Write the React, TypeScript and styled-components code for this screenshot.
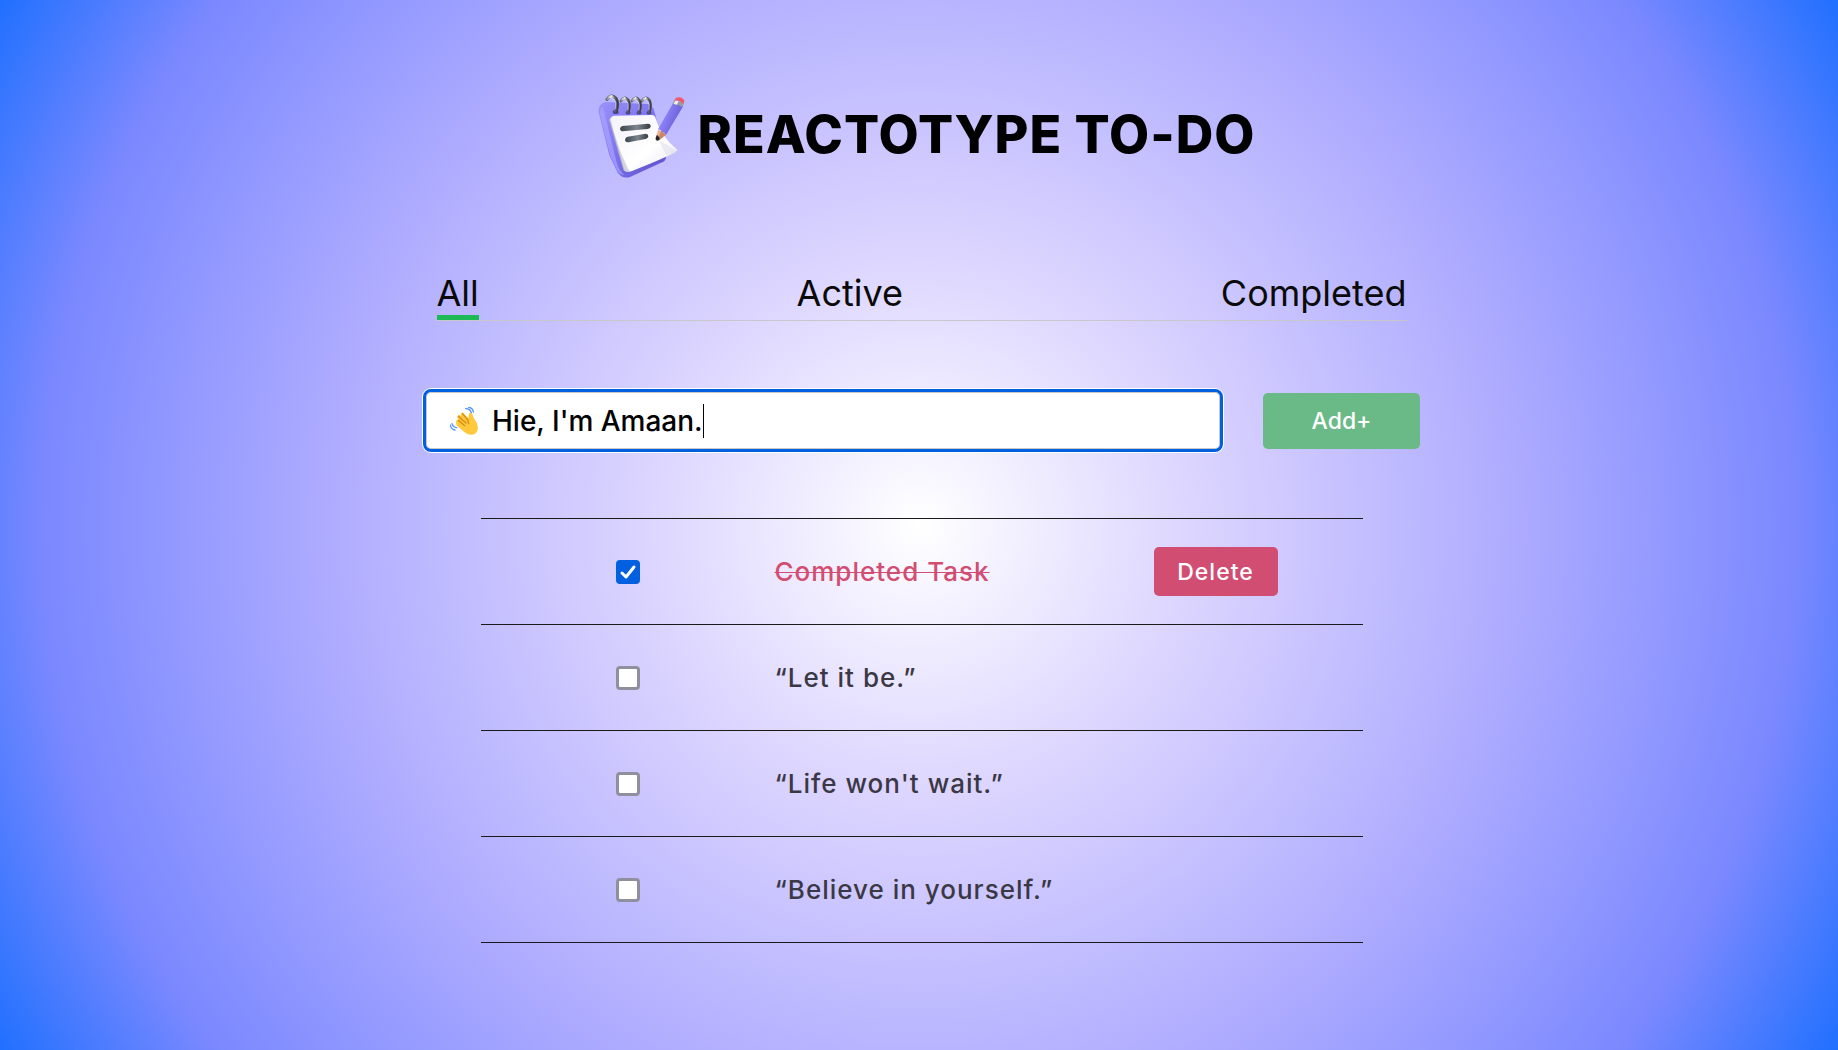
import React, { useState } from "react";
import styled, { createGlobalStyle } from "styled-components";

const sans = `Inter, "Noto Sans", sans-serif`;

const GlobalStyle = createGlobalStyle`
  *, *::before, *::after { box-sizing: border-box; }
  body {
    margin: 0;
    min-height: 100vh;
    font-family: ${sans};
    color: #000;
    background: radial-gradient(circle at 50% 50%, #fff 0%, #ddd6ff 25%, #b0adff 55%, #7a88ff 83%, #2070ff 100%) no-repeat;
    background-size: 100% 100%;
  }
  button, input { font-family: inherit; }
`;

const Page = styled.main`
  display: flex;
  flex-direction: column;
  align-items: center;
  min-height: 100vh;
  padding: 94px 0 40px 5px;
`;

const Header = styled.header`
  display: flex;
  align-items: center;
  gap: 12px;
  height: 86px;
  padding-left: 10px;
`;

const Title = styled.h1`
  margin: 0;
  padding-bottom: 4px;
  font-size: 52px;
  line-height: 64px;
  font-weight: 800;
  letter-spacing: 1px;
  text-transform: uppercase;
`;

const Tabs = styled.nav`
  display: flex;
  justify-content: space-between;
  width: min(970px, 90%);
  margin-top: 91px;
  border-bottom: 1px solid #c8c8cc;
`;

const Tab = styled.button<{ $active: boolean }>`
  padding: 0;
  border: 0;
  border-bottom: 5px solid ${(p) => (p.$active ? "#1db954" : "transparent")};
  background: none;
  color: #0a0a0a;
  font-size: 36px;
  line-height: 44px;
  cursor: pointer;
`;

const Form = styled.form`
  display: flex;
  align-items: center;
  gap: 40px;
  width: min(997px, 92%);
  margin-top: 68px;
`;

const Field = styled.label`
  display: flex;
  flex: 1;
  align-items: center;
  min-width: 0;
  height: 63px;
  padding: 0 24px;
  border: 3px solid #0060df;
  border-radius: 8px;
  background: #fff;
  box-shadow: 0 0 0 1px #fff, inset 0 0 0 1px #c8c8c8;
  cursor: text;
`;

const TaskInput = styled.input`
  field-sizing: content;
  max-width: 100%;
  min-width: 4px;
  height: 40px;
  margin-left: 14px;
  padding: 0;
  border: 0;
  outline: 0;
  background: none;
  color: #000;
  caret-color: transparent;
  font-size: 28px;
  font-weight: 500;
`;

const Caret = styled.span`
  width: 1px;
  height: 34px;
  background: #000;
`;

const AddButton = styled.button`
  width: 157px;
  height: 56px;
  border: 0;
  border-radius: 5px;
  background: #6aba88;
  color: #fff;
  font-size: 23px;
  font-weight: 500;
  cursor: pointer;
`;

const List = styled.ul`
  width: min(882px, 90%);
  margin: 66px 0 0;
  padding: 0;
  border-top: 1px solid #1a1a1a;
  list-style: none;
`;

const Row = styled.li`
  display: grid;
  grid-template-columns: repeat(3, 1fr);
  align-items: center;
  height: 106px;
  border-bottom: 1px solid #1a1a1a;
`;

const CheckCell = styled.span`
  display: grid;
  place-items: center;
  > * { grid-area: 1 / 1; }
  svg { pointer-events: none; }
`;

const Check = styled.input`
  appearance: none;
  width: 24px;
  height: 24px;
  margin: 0;
  border: 3px solid #8f8f9d;
  border-radius: 4px;
  background: #fff;
  cursor: pointer;
  &:checked {
    border-color: #0060df;
    background: #0060df;
  }
`;

const TaskText = styled.label<{ $done: boolean }>`
  color: ${(p) => (p.$done ? "#d14d72" : "#3b3846")};
  font-size: 26px;
  line-height: 32px;
  font-weight: 500;
  letter-spacing: 1px;
  white-space: nowrap;
  text-decoration: ${(p) => (p.$done ? "line-through 1px" : "none")};
`;

const DeleteButton = styled.button`
  justify-self: center;
  width: 124px;
  height: 49px;
  padding: 0;
  border: 0;
  border-radius: 5px;
  background: #d14d72;
  color: #fff;
  font-size: 23px;
  font-weight: 500;
  letter-spacing: 1px;
  cursor: pointer;
`;

function NotepadLogo() {
  return (
    <svg width="88" height="86" viewBox="48 42 264 258" aria-hidden="true">
      <defs>
        <linearGradient id="cover" x1="0" y1="0" x2="1" y2="1">
          <stop offset="0" stopColor="#9a92fa" />
          <stop offset="0.5" stopColor="#7d72ee" />
          <stop offset="1" stopColor="#5b4fc4" />
        </linearGradient>
        <linearGradient id="paper" x1="0" y1="0" x2="1" y2="1">
          <stop offset="0" stopColor="#f3f3fa" />
          <stop offset="0.6" stopColor="#ffffff" />
          <stop offset="1" stopColor="#e9e8f4" />
        </linearGradient>
        <linearGradient id="ink" x1="0" y1="0" x2="1" y2="0">
          <stop offset="0" stopColor="#3d444c" />
          <stop offset="0.55" stopColor="#7c858e" />
          <stop offset="1" stopColor="#343a42" />
        </linearGradient>
        <linearGradient id="ring" x1="0" y1="0" x2="1" y2="0">
          <stop offset="0" stopColor="#8d8d96" />
          <stop offset="0.4" stopColor="#f4f4f7" />
          <stop offset="0.7" stopColor="#77777f" />
          <stop offset="1" stopColor="#3e3e45" />
        </linearGradient>
        <linearGradient id="barrel" x1="0" y1="0" x2="1" y2="0.5">
          <stop offset="0" stopColor="#a69dff" />
          <stop offset="0.5" stopColor="#8378f0" />
          <stop offset="1" stopColor="#6257cf" />
        </linearGradient>
      </defs>
      <path d="M70 66 L196 72 Q212 76 217 94 L252 230 Q252 242 242 246 L144 291 Q120 298 106 276 L82 226 L50 96 Q49 72 70 66Z" fill="url(#cover)" />
      <path d="M57 84 Q58 78 64 84 L103 244 Q112 276 128 285 Q112 286 103 268 L84 226 L53 98Z" fill="#aaa2ff" opacity="0.7" />
      <path d="M86 112 L82 120 L124 268 Q128 278 142 276 L282 218 L250 190Z" fill="#d4d3e2" />
      <path d="M83 121 L126 271" stroke="#a5a4b8" strokeWidth="2" />
      <path d="M89 111 Q92 107 98 107 L210 105 Q217 105 220 112 Q235 168 287 211 Q242 238 151 272 Q142 277 137 264 Q104 196 86 118Z" fill="url(#paper)" />
      <path d="M121 138 L198 131 Q207 132 206 140 Q204 146 197 147 L123 154 Q114 153 114 146 Q115 140 121 138Z" fill="url(#ink)" />
      <path d="M137 170 L191 161 Q199 162 199 169 Q198 176 191 177 L140 187 Q130 187 129 179 Q130 172 137 170Z" fill="url(#ink)" />
      {[74, 116, 149, 179].map((x, i) => (
        <g key={x} transform={`translate(${x} ${i === 0 ? 46 : 52}) scale(${i === 0 ? 1 : 0.82} ${i === 0 ? 1 : 0.92})`}>
          <ellipse cx="27" cy="50" rx="9" ry="6" fill="#4b4399" />
          <path d="M1 12 Q14 -6 28 9 Q38 25 28 49" fill="none" stroke="#4a4a52" strokeWidth="9" strokeLinecap="round" />
          <path d="M2 11 Q14 -5 27 10 Q36 26 27 48" fill="none" stroke="url(#ring)" strokeWidth="7" strokeLinecap="round" />
          <path d="M8 6 Q22 5 28 23 L27 40" fill="none" stroke="#ffffff" strokeWidth="2" strokeLinecap="round" opacity="0.8" />
        </g>
      ))}
      <path d="M230 180 L287 213 L252 225Z" fill="#dddcea" opacity="0.5" />
      <path d="M229 148 L252 164 L232 180 Q223 184 220 177Z" fill="#e9b08c" />
      <path d="M238 153 L252 164 L232 180 L226 180Z" fill="#c98764" />
      <path d="M224 166 Q231 167 233 178 L228 182 Q220 183 221 175Z" fill="#25232b" />
      <path d="M273 70 L304 78 L252 165 Q248 155 239 156 Q237 147 228 148Z" fill="url(#barrel)" />
      <path d="M277 60 L306 68 Q305 77 300 82 Q290 72 271 72Z" fill="#9b9ba5" />
      <path d="M280 62 L290 64 L284 74 L275 71Z" fill="#ededf2" />
      <path d="M279 58 Q282 51 292 52 Q306 55 307 63 L304 72 Q292 60 277 61Z" fill="#ef5a6c" />
    </svg>
  );
}

function WavingHand() {
  return (
    <svg width="28" height="28" viewBox="0 0 84 84" aria-hidden="true">
      <path d="M19 46 Q16 38 25 39 L22 31 Q22 22 31 25 L33 27 Q31 15 40 17 L52 31 L56 33 Q56 26 57 20 Q62 14 67 21 Q68 27 73 36 Q86 51 83 68 Q78 84 61 83 Q51 82 42 74 L21 56 Q17 51 19 46Z" fill="#ffc83d" />
      <path d="M25 40 L44 56 M25 28 L48 48 M37 20 L54 39 Q52 45 57 50" fill="none" stroke="#d98b12" strokeWidth="4" strokeLinecap="round" />
      <path d="M47 5 Q60 5 64 17 M56 1 Q69 3 70 15 M6 50 Q9 61 20 62 M1 54 Q3 67 15 69" fill="none" stroke="#5092ff" strokeWidth="4" strokeLinecap="round" />
    </svg>
  );
}

const filters = ["All", "Active", "Completed"];

const initialTasks = [
  { id: 1, text: "Completed Task", done: true },
  { id: 2, text: "“Let it be.”", done: false },
  { id: 3, text: "“Life won't wait.”", done: false },
  { id: 4, text: "“Believe in yourself.”", done: false },
];

export default function App() {
  const [filter, setFilter] = useState("All");
  const [draft, setDraft] = useState("Hie, I'm Amaan.");
  const [tasks, setTasks] = useState(initialTasks);

  const visible = tasks.filter(
    (t) => filter === "All" || (filter === "Completed" ? t.done : !t.done)
  );

  const addTask = (e: React.FormEvent) => {
    e.preventDefault();
    if (!draft.trim()) return;
    setTasks([...tasks, { id: Date.now(), text: draft, done: false }]);
    setDraft("");
  };

  const toggle = (id: number) =>
    setTasks(tasks.map((t) => (t.id === id ? { ...t, done: !t.done } : t)));

  return (
    <>
      <GlobalStyle />
      <Page>
        <Header>
          <NotepadLogo />
          <Title>Reactotype To-Do</Title>
        </Header>
        <Tabs>
          {filters.map((f) => (
            <Tab key={f} type="button" $active={f === filter} onClick={() => setFilter(f)}>
              {f}
            </Tab>
          ))}
        </Tabs>
        <Form onSubmit={addTask}>
          <Field>
            <WavingHand />
            <TaskInput
              type="text"
              aria-label="New task"
              value={draft}
              onChange={(e) => setDraft(e.target.value)}
            />
            <Caret />
          </Field>
          <AddButton type="submit">Add+</AddButton>
        </Form>
        <List>
          {visible.map((t) => (
            <Row key={t.id}>
              <CheckCell>
                <Check
                  type="checkbox"
                  id={`task-${t.id}`}
                  checked={t.done}
                  onChange={() => toggle(t.id)}
                />
                {t.done && (
                  <svg width="24" height="24" viewBox="0 0 24 24" aria-hidden="true">
                    <path d="M6 13 L10 17 L18 7" fill="none" stroke="#fff" strokeWidth="3" strokeLinecap="round" strokeLinejoin="round" />
                  </svg>
                )}
              </CheckCell>
              <TaskText htmlFor={`task-${t.id}`} $done={t.done}>
                {t.text}
              </TaskText>
              {t.done && (
                <DeleteButton type="button" onClick={() => setTasks(tasks.filter((x) => x.id !== t.id))}>
                  Delete
                </DeleteButton>
              )}
            </Row>
          ))}
        </List>
      </Page>
    </>
  );
}
